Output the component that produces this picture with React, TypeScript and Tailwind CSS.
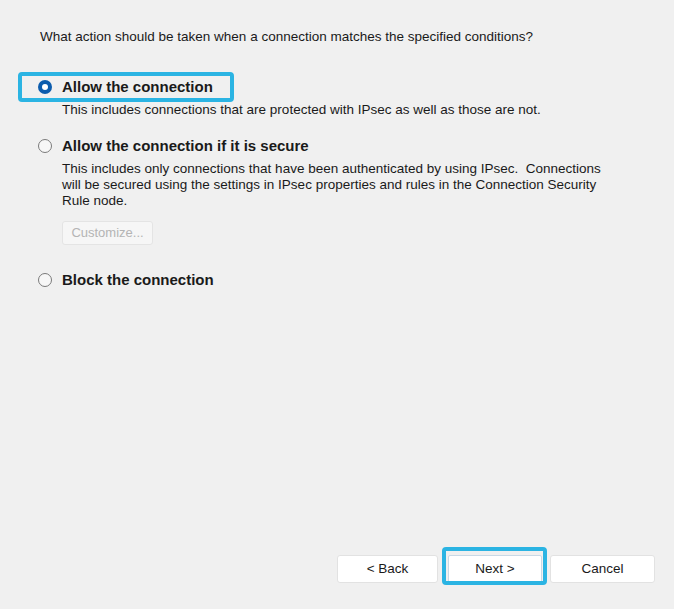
import React from "react";

function Radio({ checked }: { checked?: boolean }) {
  if (checked) {
    return (
      <span className="w-[14px] h-[14px] rounded-full bg-[#0b5cad] flex items-center justify-center shrink-0">
        <span className="w-[6px] h-[6px] rounded-full bg-white" />
      </span>
    );
  }
  return (
    <span className="w-[14px] h-[14px] rounded-full border border-[#7a7a7a] bg-[#f7f7f7] shrink-0" />
  );
}

export default function App() {
  return (
    <div
      className="w-[674px] h-[609px] bg-[#f0f0f0] flex flex-col text-[#1a1a1a] relative"
      style={{ fontFamily: '"Liberation Sans", Arial, sans-serif' }}
    >
      <div className="pt-[29px] pl-[40px] text-[13.5px] leading-[16px]">
        What action should be taken when a connection matches the specified conditions?
      </div>

      <div className="pl-[38px] mt-[33px] relative">
        <div className="absolute left-[18px] top-[-6px] w-[216px] h-[30px] border-[4px] border-[#2bb4e3] rounded-[4px]" />
        <div className="flex items-center h-[18px] gap-[10px]">
          <Radio checked />
          <span className="font-bold text-[15px] leading-[18px]">Allow the connection</span>
        </div>
        <div className="pl-[24px] mt-[6px] text-[13.5px] leading-[16px]">
          This includes connections that are protected with IPsec as well as those are not.
        </div>
      </div>

      <div className="pl-[38px] mt-[19px]">
        <div className="flex items-center h-[18px] gap-[10px]">
          <Radio />
          <span className="font-bold text-[15px] leading-[18px]">Allow the connection if it is secure</span>
        </div>
        <div className="pl-[24px] mt-[6px] text-[13.5px] leading-[16px] w-[630px]">
          This includes only connections that have been authenticated by using IPsec.&nbsp; Connections
          <br />
          will be secured using the settings in IPsec properties and rules in the Connection Security
          <br />
          Rule node.
        </div>
        <div className="pl-[24px] mt-[12px]">
          <div className="w-[91px] h-[24px] bg-[#f6f6f6] border border-[#e4e4e4] rounded-[3px] flex items-center justify-center text-[13px] text-[#b4b4b4]">
            Customize...
          </div>
        </div>
      </div>

      <div className="pl-[38px] mt-[26px]">
        <div className="flex items-center h-[18px] gap-[10px]">
          <Radio />
          <span className="font-bold text-[15px] leading-[18px]">Block the connection</span>
        </div>
      </div>

      <div className="flex-1" />

      <div className="flex items-center justify-end pr-[19px] pb-[26px]">
        <div className="w-[101px] h-[28px] bg-white border border-[#e2e2e2] rounded-[3px] flex items-center justify-center text-[13.5px]">
          &lt; Back
        </div>
        <div className="ml-[10px] relative">
          <div className="absolute left-[-6px] right-[-5px] top-[-8px] bottom-[-2px] border-[4px] border-[#2bb4e3] rounded-[4px]" />
          <div className="w-[94px] h-[28px] bg-white border border-[#c9d9e6] rounded-[2px] flex items-center justify-center text-[13.5px]">
            Next &gt;
          </div>
        </div>
        <div className="ml-[8px] w-[105px] h-[28px] bg-white border border-[#e2e2e2] rounded-[3px] flex items-center justify-center text-[13.5px]">
          Cancel
        </div>
      </div>
    </div>
  );
}
